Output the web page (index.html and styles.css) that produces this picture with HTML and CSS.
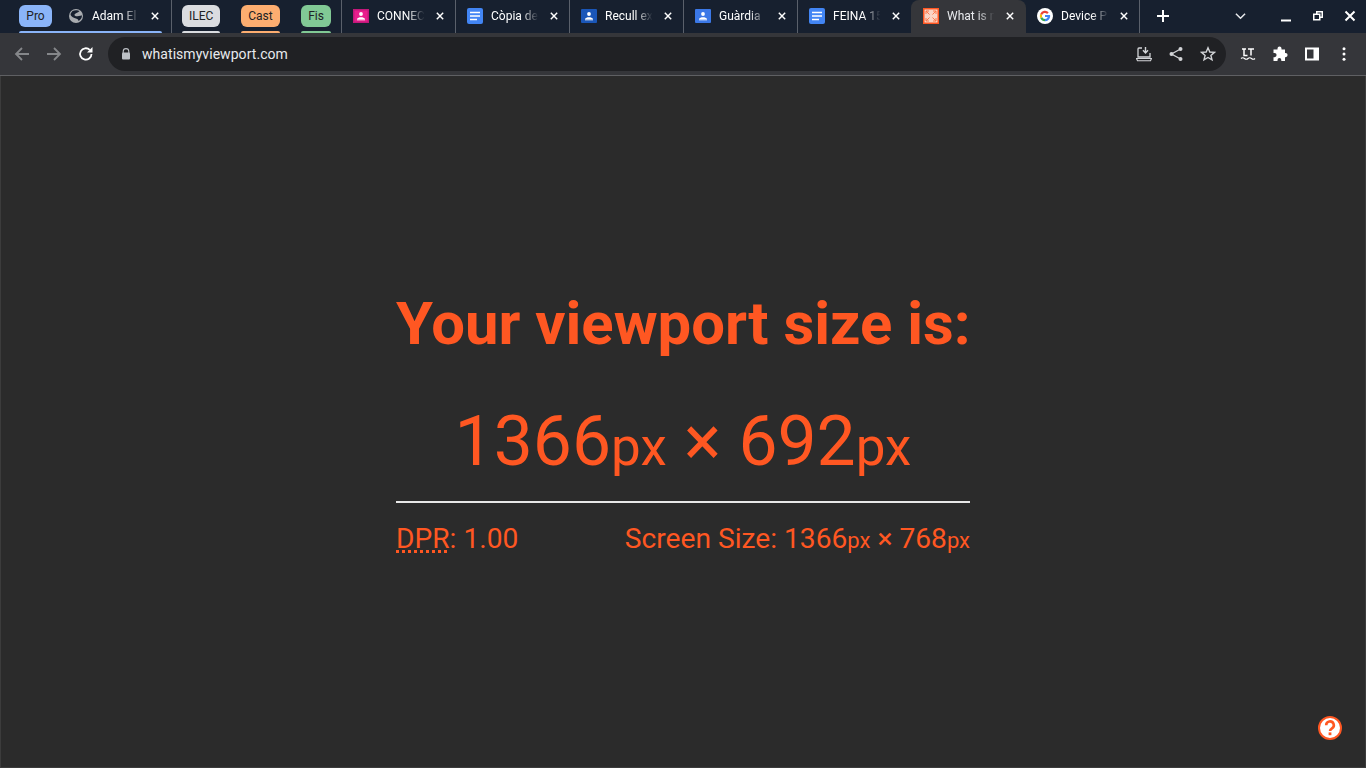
FILE: index.html
```html
<!DOCTYPE html>
<html>
  <head>
    <title>What is my viewport</title>
    <link rel="stylesheet" href="styles.css">
  </head>
  <body>
    <div class="tabstrip">
      <div class="group group-blue">
        <span class="chip chip-blue">Pro</span>
        <div class="tab tab-first">
          <svg class="favicon" viewBox="0 0 16 16"><circle cx="8" cy="8" r="7" fill="#a9acb0"/><path d="M4.5 3 C6.5 1.8 10 2 11.5 3 C10.5 5 7.5 4.5 6.5 6.5 C6 8 8 8.3 9.5 8.2 C11.5 8 13.5 7.5 14 7.5 C14 10 12.5 12 10.5 13 C10.5 11 8.5 10.5 6.5 10 C4 9.2 2.5 7.5 2.5 6 C3 5 3.6 3.8 4.5 3Z" fill="#17202f"/></svg>
          <span class="title">Adam El</span>
          <svg class="close" viewBox="0 0 10 10"><path d="M1 1 L9 9 M9 1 L1 9"/></svg>
        </div>
      </div>
      <div class="group group-grey">
        <span class="chip chip-grey">ILEC</span>
      </div>
      <div class="group group-orange">
        <span class="chip chip-orange">Cast</span>
      </div>
      <div class="group group-green">
        <span class="chip chip-green">Fis</span>
      </div>
      <div class="tab">
        <svg class="favicon" viewBox="0 0 16 16"><rect y="1" width="16" height="14" fill="#c2187a"/><rect x="1.5" y="2.5" width="13" height="11" fill="#e91e8c"/><circle cx="8" cy="6" r="1.9" fill="#fff"/><path d="M4 11 C5 8.6 11 8.6 12 11Z" fill="#fff"/><rect x="4" y="11.3" width="8" height="1" fill="#fff"/></svg>
        <span class="title">CONNECTA</span>
        <svg class="close" viewBox="0 0 10 10"><path d="M1 1 L9 9 M9 1 L1 9"/></svg>
      </div>
      <div class="tab">
        <svg class="favicon" viewBox="0 0 16 16"><rect width="16" height="16" rx="2" fill="#4285f4"/><path d="M3 4.5 H13 M3 8 H13 M3 11.5 H10" stroke="#fff" stroke-width="1.6"/></svg>
        <span class="title">Còpia de</span>
        <svg class="close" viewBox="0 0 10 10"><path d="M1 1 L9 9 M9 1 L1 9"/></svg>
      </div>
      <div class="tab">
        <svg class="favicon" viewBox="0 0 16 16"><rect y="1" width="16" height="14" rx="1" fill="#1a56b8"/><circle cx="8" cy="6" r="1.9" fill="#fff"/><path d="M4 11 C5 8.6 11 8.6 12 11Z" fill="#fff"/><rect x="4" y="11.3" width="8" height="1" fill="#fff"/></svg>
        <span class="title">Recull ex</span>
        <svg class="close" viewBox="0 0 10 10"><path d="M1 1 L9 9 M9 1 L1 9"/></svg>
      </div>
      <div class="tab">
        <svg class="favicon" viewBox="0 0 16 16"><rect y="1" width="16" height="14" rx="1" fill="#3b78e7"/><circle cx="8" cy="6" r="1.9" fill="#fff"/><path d="M4 11 C5 8.6 11 8.6 12 11Z" fill="#fff"/><rect x="4" y="11.3" width="8" height="1" fill="#fff"/></svg>
        <span class="title">Guàrdia</span>
        <svg class="close" viewBox="0 0 10 10"><path d="M1 1 L9 9 M9 1 L1 9"/></svg>
      </div>
      <div class="tab">
        <svg class="favicon" viewBox="0 0 16 16"><rect width="16" height="16" rx="2" fill="#4285f4"/><path d="M3 4.5 H13 M3 8 H13 M3 11.5 H10" stroke="#fff" stroke-width="1.6"/></svg>
        <span class="title">FEINA 15</span>
        <svg class="close" viewBox="0 0 10 10"><path d="M1 1 L9 9 M9 1 L1 9"/></svg>
      </div>
      <div class="tab tab-active">
        <svg class="favicon" viewBox="0 0 16 16"><rect width="16" height="16" fill="#ff5722"/><rect x="1.5" y="1.5" width="13" height="13" fill="#fbd5c5"/><path d="M3 3 L6.5 6.5 M13 3 L9.5 6.5 M3 13 L6.5 9.5 M13 13 L9.5 9.5 M3 6 V3 H6 M10 3 H13 V6 M3 10 V13 H6 M10 13 H13 V10" fill="none" stroke="#ff7a4d" stroke-width="1"/></svg>
        <span class="title">What is my</span>
        <svg class="close" viewBox="0 0 10 10"><path d="M1 1 L9 9 M9 1 L1 9"/></svg>
      </div>
      <div class="tab tab-last">
        <svg class="favicon" viewBox="0 0 16 16"><circle cx="8" cy="8" r="8" fill="#fff"/><path d="M12.9 6.9 H8 V9 H10.8 A3 3 0 0 1 8 11 V13.2 A5.2 5.2 0 0 0 13.2 8 Q13.2 7.4 12.9 6.9Z" fill="#4285f4"/><path d="M8 13.2 A5.2 5.2 0 0 1 3.3 10.2 L5.1 8.9 A3 3 0 0 0 8 11Z" fill="#34a853"/><path d="M3.3 10.2 A5.2 5.2 0 0 1 3.3 5.8 L5.1 7.1 A3 3 0 0 0 5.1 8.9Z" fill="#fbbc05"/><path d="M3.3 5.8 A5.2 5.2 0 0 1 11.7 4.3 L10.1 5.9 A3 3 0 0 0 5.1 7.1Z" fill="#ea4335"/></svg>
        <span class="title">Device Pi</span>
        <svg class="close" viewBox="0 0 10 10"><path d="M1 1 L9 9 M9 1 L1 9"/></svg>
      </div>
      <svg class="newtab" viewBox="0 0 12 12"><path d="M6 0 V12 M0 6 H12"/></svg>
      <svg class="tabsearch" viewBox="0 0 12 8"><path d="M1 1.5 L6 6.5 L11 1.5"/></svg>
      <div class="winbtns">
        <svg class="winbtn" viewBox="0 0 12 12"><path d="M1 10.5 H11" stroke="#fff" stroke-width="2"/></svg>
        <svg class="winbtn" viewBox="0 0 12 12"><path d="M4 1 H11 V8 H8.5 V10.5 H1 V3.5 H4Z M5.5 2.5 V3.5 H8.5 V6.5 H9.5 V2.5Z M2.5 5 V9 H7 V5Z" fill="#fff" fill-rule="evenodd"/></svg>
        <svg class="winbtn" viewBox="0 0 12 12"><path d="M1.5 1.5 L10.5 10.5 M10.5 1.5 L1.5 10.5" stroke="#fff" stroke-width="2"/></svg>
      </div>
    </div>

    <div class="toolbar">
      <svg class="navbtn" viewBox="0 0 16 16"><path d="M15 8 H2 M8 2 L2 8 L8 14" stroke="#85878a"/></svg>
      <svg class="navbtn" viewBox="0 0 16 16"><path d="M1 8 H14 M8 2 L14 8 L8 14" stroke="#85878a"/></svg>
      <svg class="navbtn" viewBox="0 0 16 16"><path d="M13.5 8 A5.7 5.7 0 1 1 11.8 3.9" stroke="#fff"/><path d="M14.5 1 V6.5 H9Z" fill="#fff"/></svg>
      <div class="omnibox">
        <svg class="lock" viewBox="0 0 10 12"><path d="M2.2 5 V3.4 A2.8 2.8 0 0 1 7.8 3.4 V5" fill="none" stroke="#bdc1c6" stroke-width="1.1"/><rect y="4.6" x="1" width="8" height="7" rx="1" fill="#bdc1c6"/></svg>
        <span class="url">whatismyviewport.com</span>
        <div class="omni-icons">
          <svg class="omni-icon" viewBox="0 0 16 16"><path d="M6 2 H3 Q2 2 2 3 V11 H14 V7" fill="none" stroke="#d2d4d7" stroke-width="1.3"/><path d="M9.5 1 V6 M7 4.2 L9.5 7 L12 4.2" fill="none" stroke="#d2d4d7" stroke-width="1.4"/><path d="M0.5 12.5 H15.5 L14.5 14.8 H1.5Z" fill="none" stroke="#d2d4d7" stroke-width="1.1"/></svg>
          <svg class="omni-icon" viewBox="0 0 16 16"><path d="M12.5 3 L3.5 8 L12.5 13" fill="none" stroke="#d2d4d7" stroke-width="1.3"/><circle cx="12.5" cy="3" r="2" fill="#d2d4d7"/><circle cx="3.5" cy="8" r="2" fill="#d2d4d7"/><circle cx="12.5" cy="13" r="2" fill="#d2d4d7"/></svg>
          <svg class="omni-icon" viewBox="0 0 16 16"><path d="M8 1.8 L9.8 6 L14.4 6.4 L10.9 9.4 L12 13.9 L8 11.5 L4 13.9 L5.1 9.4 L1.6 6.4 L6.2 6Z" fill="none" stroke="#d2d4d7" stroke-width="1.4"/></svg>
        </div>
      </div>
      <div class="extensions">
        <svg class="ext" viewBox="0 0 16 16"><path d="M2 3 H6 M4 3 V9.5 H7.5 M8 3 H14 M11 3 V9.5" fill="none" stroke="#fff" stroke-width="1.5"/><path d="M1 12.5 Q2.7 11 4.5 12.5 T8 12.5 T11.5 12.5 T15 12.5" fill="none" stroke="#fff" stroke-width="1.2"/></svg>
        <svg class="ext" viewBox="0 0 16 16"><path d="M5.5 2.6 A2 2 0 0 1 9.5 2.6 V3.5 H13 V7 H13.5 A2.1 2.1 0 0 1 13.5 11.2 H13 V15 H9.3 V14 A1.9 1.9 0 0 0 5.5 14 V15 H1.5 V11.2 H2.5 A2.1 2.1 0 0 0 2.5 7 H1.5 V3.5 H5.5Z" fill="#fff"/></svg>
        <svg class="ext" viewBox="0 0 16 16"><path d="M1 1.5 H15 V14.5 H1Z M3 3.5 V12.5 H9.5 V3.5Z" fill="#fff" fill-rule="evenodd"/></svg>
        <svg class="ext" viewBox="0 0 16 16"><circle cx="8" cy="2.8" r="1.5" fill="#fff"/><circle cx="8" cy="8" r="1.5" fill="#fff"/><circle cx="8" cy="13.2" r="1.5" fill="#fff"/></svg>
      </div>
    </div>

    <main class="page">
      <div class="viewport-box">
        <h1>Your viewport size is:</h1>
        <p class="size">1366<small>px</small> × 692<small>px</small></p>
        <div class="info">
          <span><abbr>DPR</abbr>: 1.00</span>
          <span>Screen Size: 1366<small>px</small> × 768<small>px</small></span>
        </div>
      </div>
      <svg class="help" viewBox="0 0 24 24"><circle cx="12" cy="12" r="11" fill="#fff" stroke="#ff5722" stroke-width="2"/><path d="M8.2 9.3 A3.8 3.8 0 1 1 14 12.4 C12.8 13.2 12 13.6 12 15" fill="none" stroke="#ff5722" stroke-width="2.6"/><rect x="10.6" y="16.4" width="2.8" height="2.8" fill="#ff5722"/></svg>
    </main>
  </body>
</html>
```

FILE: styles.css
```css
html, body {
  margin: 0;
  height: 100%;
  overflow: hidden;
}
body {
  font-family: Roboto, sans-serif;
  background: #2b2b2b;
  display: flex;
  flex-direction: column;
}

/* tab strip */
.tabstrip {
  height: 33px;
  flex: none;
  display: flex;
  align-items: stretch;
  background: #17202f;
  font-size: 12px;
  color: #fff;
}
.group {
  display: flex;
  align-items: flex-start;
  position: relative;
  flex: none;
}
.group::after {
  content: "";
  position: absolute;
  bottom: 0;
  height: 2px;
  border-radius: 2px 2px 0 0;
}
.group-blue { padding-left: 19px; }
.group-blue::after { left: 19px; right: 10px; background: #8ab4f8; }
.group-grey { padding-left: 10px; }
.group-grey::after { left: 10px; right: 0; background: #dadce0; }
.group-orange { padding-left: 21px; }
.group-orange::after { left: 21px; right: 0; background: #fcad70; }
.group-green { padding: 0 10px 0 21px; }
.group-green::after { left: 21px; right: 10px; background: #81c995; }

.chip {
  margin-top: 5px;
  height: 22px;
  line-height: 22px;
  padding: 0 7px;
  border-radius: 6px;
  color: #202124;
  font-size: 12px;
}
.chip-blue { background: #8ab4f8; width: 19px; text-align: center; }
.chip-grey { background: #dadce0; width: 24px; text-align: center; }
.chip-orange { background: #fcad70; width: 25px; text-align: center; }
.chip-green { background: #81c995; width: 16px; text-align: center; }

.tab {
  width: 114px;
  height: 33px;
  box-sizing: border-box;
  flex: none;
  display: flex;
  align-items: center;
  padding-left: 11px;
  border-left: 1px solid #5a606b;
}
.tab-first { border-left: 0; padding-left: 16px; border-right: 1px solid #5a606b; width: 120px; }
.tab-active {
  background: #35363a;
  border-left: 0;
  border-radius: 8px 8px 0 0;
  width: 115px;
  padding-left: 12px;
}
.tab-last { border-left: 0; padding-left: 11px; width: 114px; border-right: 1px solid #5a606b; }
.favicon {
  width: 16px;
  height: 16px;
  flex: none;
  margin-bottom: 2px;
}
.title {
  width: 50px;
  margin-left: 8px;
  margin-bottom: 2px;
  white-space: nowrap;
  overflow: hidden;
  -webkit-mask-image: linear-gradient(to right, #000 60%, transparent 95%);
  mask-image: linear-gradient(to right, #000 60%, transparent 95%);
}
.tab-active .title { color: #e8eaed; }
.close {
  width: 8px;
  height: 8px;
  margin-left: 8.5px;
  margin-bottom: 2px;
  flex: none;
  fill: none;
  stroke: #fff;
  stroke-width: 1.8;
}
.newtab {
  width: 12px;
  height: 12px;
  margin: 10px 0 0 17px;
  fill: none;
  stroke: #fff;
  stroke-width: 2;
}
.tabsearch {
  width: 11px;
  height: 8px;
  margin: 12px 0 0 66px;
  fill: none;
  stroke: #e8eaed;
  stroke-width: 1.6;
}
.winbtns {
  display: flex;
  gap: 20px;
  margin: 10px 0 0 34px;
}
.winbtn {
  width: 12px;
  height: 12px;
}

/* toolbar */
.toolbar {
  height: 43px;
  box-sizing: border-box;
  flex: none;
  display: flex;
  align-items: center;
  background: #35363a;
  border-bottom: 1px solid #5f6063;
  padding: 0 14px;
}
.navbtn {
  width: 16px;
  height: 16px;
  margin-right: 16px;
  fill: none;
  stroke-width: 1.8;
}
.omnibox {
  width: 1118px;
  height: 34px;
  margin-left: -2px;
  border-radius: 17px;
  background: #202124;
  display: flex;
  align-items: center;
  padding-left: 13px;
  box-sizing: border-box;
}
.lock {
  width: 10px;
  height: 12px;
  flex: none;
}
.url {
  margin-left: 11px;
  font-size: 14px;
  letter-spacing: 0.05px;
  color: #e8eaed;
}
.omni-icons {
  display: flex;
  gap: 16px;
  margin-left: auto;
  padding-right: 10px;
}
.omni-icon {
  width: 16px;
  height: 16px;
}
.extensions {
  display: flex;
  gap: 16px;
  margin-left: 14px;
}
.ext {
  width: 16px;
  height: 16px;
}

/* page */
.page {
  flex: 1;
  position: relative;
  display: flex;
  align-items: center;
  justify-content: center;
  color: #ff5722;
  border: 1px solid #3c3c3c;
  border-top: 0;
}
.viewport-box {
  width: 574px;
  padding-top: 2px;
}
h1 {
  margin: 0;
  font-size: 59.84px;
  font-weight: 700;
  line-height: 70px;
  text-align: center;
  white-space: nowrap;
}
.size {
  margin: 40px 0 0;
  font-size: 69.6px;
  line-height: 84px;
  text-align: center;
  padding-bottom: 12px;
  border-bottom: 2px solid #e8e8e8;
  white-space: nowrap;
}
.size small {
  font-size: 53px;
}
.info {
  display: flex;
  justify-content: space-between;
  margin-top: 19px;
  font-size: 28.16px;
  line-height: 33px;
}
.info small {
  font-size: 22px;
}
abbr {
  text-decoration: underline dotted;
  text-decoration-thickness: 3px;
  text-underline-offset: 2px;
}
.help {
  position: absolute;
  right: 23px;
  bottom: 27px;
  width: 24px;
  height: 24px;
}
```
